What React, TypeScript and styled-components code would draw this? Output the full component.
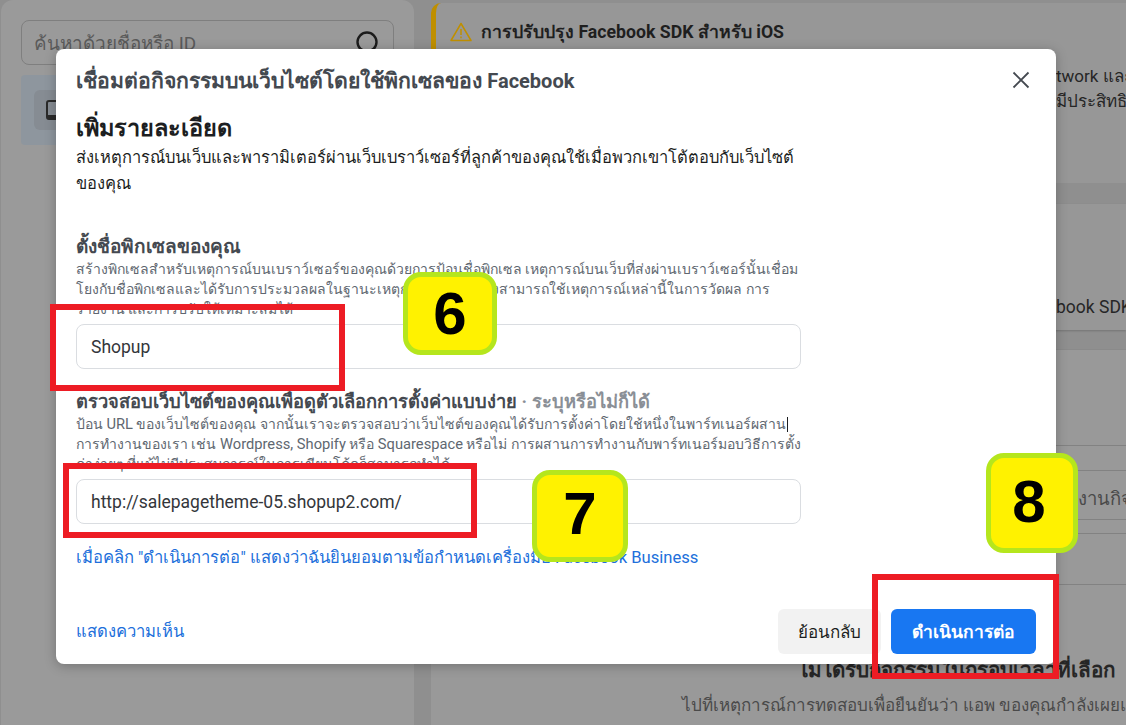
import React from 'react'
import styled, { createGlobalStyle } from 'styled-components'

const GlobalStyle = createGlobalStyle`
  html, body {
    margin: 0;
    padding: 0;
    height: 100%;
    overflow: hidden;
    background: #8f8f8f;
  }
  * {
    box-sizing: border-box;
  }
  body {
    font-family: Roboto, "Noto Sans", "Liberation Sans", sans-serif;
  }
`

const Page = styled.div`
  width: 1126px;
  height: 725px;
  display: grid;
  grid-template-columns: 414px 1fr;
  gap: 17px;
  overflow: hidden;
  background: #8f8f8f;
`

const Sidebar = styled.aside`
  margin-left: 1px;
  padding: 20px 20px 0;
  background: #9a9a9a;
  border-radius: 12px 12px 0 0;
  display: flex;
  flex-direction: column;
  gap: 10px;
`

const SearchBox = styled.div`
  height: 45px;
  padding: 0 12px;
  display: flex;
  align-items: center;
  justify-content: space-between;
  border: 1px solid #7f7f7f;
  border-radius: 8px;
  color: #5a5a5a;
  font-size: 18.9px;
  white-space: nowrap;
`

const SourceRow = styled.div`
  height: 70px;
  padding: 15px 13px;
  background: #8e969e;
  border-radius: 4px;
`

const SourceIcon = styled.div`
  width: 40px;
  height: 40px;
  display: flex;
  align-items: center;
  justify-content: center;
  background: #868c93;
  border-radius: 6px;
  color: #2a2a2a;
`

const Main = styled.main`
  padding-top: 3px;
  display: flex;
  flex-direction: column;
  overflow: hidden;
`

const Notice = styled.section`
  height: 180px;
  flex: none;
  padding: 15px 0 0 14px;
  margin-bottom: 21px;
  background: #979797;
  border-left: 5px solid #bf8f00;
  border-radius: 10px 0 0 0;
  overflow: hidden;
`

const NoticeTitle = styled.div`
  display: flex;
  align-items: center;
  gap: 9px;
  font-size: 17.7px;
  font-weight: 700;
  color: #1f1f1f;
  white-space: nowrap;
`

const NoticeLine = styled.div`
  margin-left: 606px;
  font-size: 17px;
  line-height: 25px;
  color: #262626;
  white-space: nowrap;
  &:nth-of-type(2) {
    margin-top: 18px;
  }
`

const SdkCard = styled.section`
  height: 126px;
  flex: none;
  margin-bottom: 19px;
  padding: 93px 0 0 625px;
  background: #979797;
  box-shadow: 0 1px 2px rgba(0, 0, 0, 0.2);
  font-size: 17.5px;
  color: #262626;
  white-space: nowrap;
  overflow: hidden;
`

const EventsCard = styled.section`
  flex: 1;
  background: #999999;
  border-top: 1px solid #8a8a8a;
  overflow: hidden;
`

const RuleRow = styled.div<{ $height: number }>`
  height: ${(p) => p.$height}px;
  border-bottom: 1px solid #828282;
  padding: 13px 0 0 647px;
  font-size: 18.5px;
  color: #4a4a4a;
  white-space: nowrap;
  overflow: hidden;
`

const EmptyTitle = styled.h3`
  margin: 74px 0 0 367px;
  font-size: 20.6px;
  font-weight: 700;
  line-height: 22px;
  color: #262626;
  white-space: nowrap;
`

const EmptyText = styled.p`
  margin: 10px 0 0 251px;
  font-size: 17px;
  color: #4a4a4a;
  white-space: nowrap;
`

const Modal = styled.div`
  position: absolute;
  left: 56px;
  top: 49px;
  width: 1000px;
  height: 615px;
  display: flex;
  flex-direction: column;
  background: #fff;
  border-radius: 8px;
  box-shadow: 0 2px 12px rgba(0, 0, 0, 0.25);
`

const ModalHeader = styled.header`
  height: 64px;
  flex: none;
  padding: 0 24px 2px 20px;
  display: flex;
  align-items: center;
  justify-content: space-between;
`

const ModalTitle = styled.h2`
  margin: 0;
  font-size: 21.2px;
  font-weight: 700;
  color: #444950;
`

const Latin = styled.span<{ $size: number }>`
  font-size: ${(p) => p.$size}px;
`

const CloseButton = styled.button`
  padding: 0;
  width: 22px;
  height: 22px;
  border: none;
  background: none;
  color: #444950;
`

const ModalBody = styled.div`
  flex: 1;
  padding: 0 20px;
`

const Heading = styled.h1`
  margin: 0;
  font-size: 23.5px;
  font-weight: 700;
  line-height: 30px;
  color: #1c1e21;
`

const Lead = styled.p`
  margin: 2px 0 0;
  width: 730px;
  font-size: 16.5px;
  line-height: 26px;
  color: #1c1e21;
`

const Field = styled.div<{ $top: number }>`
  margin-top: ${(p) => p.$top}px;
  width: 725px;
`

const FieldLabel = styled.div<{ $size: number }>`
  font-size: ${(p) => p.$size}px;
  font-weight: 700;
  line-height: 20px;
  color: #444950;
  white-space: nowrap;
`

const Optional = styled.span`
  color: #8a8f96;
`

const FieldHelp = styled.div<{ $gap: number }>`
  margin-top: ${(p) => p.$gap}px;
  font-size: 14px;
  line-height: 20px;
  color: #606770;
  white-space: nowrap;
`

const Caret = styled.span`
  display: inline-block;
  width: 1px;
  height: 15px;
  margin-left: 1px;
  vertical-align: -3px;
  background: #1c1e21;
`

const TextBox = styled.div`
  height: 45px;
  margin-top: 5px;
  padding: 0 14px;
  display: flex;
  align-items: center;
  border: 1px solid #dadde1;
  border-radius: 8px;
  font-size: 17.5px;
  color: #33363a;
`

const LinkText = styled.a`
  font-size: 16.6px;
  color: #216fdb;
`

const TermsLine = styled.div`
  margin-top: 24px;
  line-height: 20px;
`

const ModalFooter = styled.footer`
  height: 55px;
  flex: none;
  padding: 0 20px;
  display: flex;
  align-items: flex-start;
  justify-content: space-between;
`

const FeedbackLink = styled(LinkText)`
  line-height: 45px;
`

const Actions = styled.div`
  display: flex;
  gap: 10px;
`

const Button = styled.button<{ $primary?: boolean }>`
  width: ${(p) => (p.$primary ? 145 : 103)}px;
  height: 45px;
  padding: 0;
  border: none;
  border-radius: 6px;
  font-family: inherit;
  font-size: ${(p) => (p.$primary ? 17.5 : 17)}px;
  font-weight: ${(p) => (p.$primary ? 700 : 500)};
  background: ${(p) => (p.$primary ? '#1877f2' : '#f2f2f2')};
  color: ${(p) => (p.$primary ? '#fff' : '#1c1e21')};
`

const RedBox = styled.div<{ $x: number; $y: number; $w: number; $h: number }>`
  position: absolute;
  left: ${(p) => p.$x}px;
  top: ${(p) => p.$y}px;
  width: ${(p) => p.$w}px;
  height: ${(p) => p.$h}px;
  border: 6px solid #ed1c24;
`

const Badge = styled.div<{ $x: number; $y: number; $w: number; $h: number; $pr?: number; $pb: number }>`
  position: absolute;
  left: ${(p) => p.$x}px;
  top: ${(p) => p.$y}px;
  width: ${(p) => p.$w}px;
  height: ${(p) => p.$h}px;
  padding: 0 ${(p) => p.$pr ?? 0}px ${(p) => p.$pb}px 0;
  display: flex;
  align-items: center;
  justify-content: center;
  background: #fff200;
  border: 5px solid #b5e61d;
  border-radius: 18px;
  font-family: "Liberation Sans", Arial, sans-serif;
  font-size: 60px;
  font-weight: 700;
  color: #000;
`

export default function App() {
  return (
    <>
      <GlobalStyle />
      <Page>
        <Sidebar>
          <SearchBox>
            <span>ค้นหาด้วยชื่อหรือ ID</span>
            <svg width="26" height="26" viewBox="0 0 26 26" fill="none" stroke="#1c1c1c" strokeWidth="2.4">
              <circle cx="12" cy="12" r="9.5" />
              <path d="M19 19l5 5" />
            </svg>
          </SearchBox>
          <SourceRow>
            <SourceIcon>
              <svg width="24" height="24" viewBox="0 0 24 24" fill="none" stroke="currentColor" strokeWidth="2">
                <rect x="5" y="3" width="18" height="18" rx="2" />
                <path d="M5 18.5h18" strokeWidth="3" />
              </svg>
            </SourceIcon>
          </SourceRow>
        </Sidebar>
        <Main>
          <Notice>
            <NoticeTitle>
              <svg width="22" height="20" viewBox="0 0 22 20" fill="none" stroke="#bf8f00" strokeWidth="1.5">
                <path d="M11 1.5L21 18.5H1Z" strokeLinejoin="round" />
                <path d="M11 7v6M11 14.5v1.8" />
              </svg>
              การปรับปรุง Facebook SDK สำหรับ iOS
            </NoticeTitle>
            <NoticeLine>twork และ</NoticeLine>
            <NoticeLine>มีประสิทธิ</NoticeLine>
          </Notice>
          <SdkCard>book SDK</SdkCard>
          <EventsCard>
            <RuleRow $height={96} />
            <RuleRow $height={25} />
            <RuleRow $height={49}>งานกิจกรรม</RuleRow>
            <RuleRow $height={12} />
            <RuleRow $height={51} />
            <EmptyTitle>ไม่ได้รับกิจกรรมในกรอบเวลาที่เลือก</EmptyTitle>
            <EmptyText>ไปที่เหตุการณ์การทดสอบเพื่อยืนยันว่า แอพ ของคุณกำลังเผยแพร่</EmptyText>
          </EventsCard>
        </Main>
      </Page>

      <Modal>
        <ModalHeader>
          <ModalTitle>
            เชื่อมต่อกิจกรรมบนเว็บไซต์โดยใช้พิกเซลของ <Latin $size={20}>Facebook</Latin>
          </ModalTitle>
          <CloseButton aria-label="ปิด">
            <svg width="22" height="22" viewBox="0 0 22 22" fill="none" stroke="currentColor" strokeWidth="1.8">
              <path d="M3.5 3.5l15 15M18.5 3.5l-15 15" />
            </svg>
          </CloseButton>
        </ModalHeader>
        <ModalBody>
          <Heading>เพิ่มรายละเอียด</Heading>
          <Lead>
            ส่งเหตุการณ์บนเว็บและพารามิเตอร์ผ่านเว็บเบราว์เซอร์ที่ลูกค้าของคุณใช้เมื่อพวกเขาโต้ตอบกับเว็บไซต์ของคุณ
          </Lead>
          <Field $top={40}>
            <FieldLabel $size={19}>ตั้งชื่อพิกเซลของคุณ</FieldLabel>
            <FieldHelp $gap={2}>
              สร้างพิกเซลสำหรับเหตุการณ์บนเบราว์เซอร์ของคุณด้วยการป้อนชื่อพิกเซล เหตุการณ์บนเว็บที่ส่งผ่านเบราว์เซอร์นั้นเชื่อม
              <br />
              โยงกับชื่อพิกเซลและได้รับการประมวลผลในฐานะเหตุการณ์เว็บ คุณจึงสามารถใช้เหตุการณ์เหล่านี้ในการวัดผล การ
              <br />
              รายงาน และการปรับให้เหมาะสมได้
            </FieldHelp>
            <TextBox>Shopup</TextBox>
          </Field>
          <Field $top={23}>
            <FieldLabel $size={18.3}>
              ตรวจสอบเว็บไซต์ของคุณเพื่อดูตัวเลือกการตั้งค่าแบบง่าย <Optional>· ระบุหรือไม่ก็ได้</Optional>
            </FieldLabel>
            <FieldHelp $gap={2}>
              ป้อน <Latin $size={14.7}>URL</Latin> ของเว็บไซต์ของคุณ จากนั้นเราจะตรวจสอบว่าเว็บไซต์ของคุณได้รับการตั้งค่าโดยใช้หนึ่งในพาร์ทเนอร์ผสาน
              <Caret />
              <br />
              การทำงานของเรา เช่น <Latin $size={14.7}>Wordpress, Shopify</Latin> หรือ <Latin $size={14.7}>Squarespace</Latin> หรือไม่ การผสานการทำงานกับพาร์ทเนอร์มอบวิธีการตั้ง
              <br />
              ค่าง่ายๆ ที่แม้ไม่มีประสบการณ์ในการเขียนโค้ดก็สามารถทำได้
            </FieldHelp>
            <TextBox>http://salepagetheme-05.shopup2.com/</TextBox>
          </Field>
          <TermsLine>
            <LinkText>เมื่อคลิก "ดำเนินการต่อ" แสดงว่าฉันยินยอมตามข้อกำหนดเครื่องมือ Facebook Business</LinkText>
          </TermsLine>
        </ModalBody>
        <ModalFooter>
          <FeedbackLink>แสดงความเห็น</FeedbackLink>
          <Actions>
            <Button>ย้อนกลับ</Button>
            <Button $primary>ดำเนินการต่อ</Button>
          </Actions>
        </ModalFooter>
      </Modal>

      <RedBox $x={50} $y={304} $w={295} $h={87} />
      <RedBox $x={63} $y={463} $w={414} $h={75} />
      <RedBox $x={872} $y={574} $w={187} $h={105} />
      <Badge $x={403} $y={272} $w={94} $h={83} $pb={1}>6</Badge>
      <Badge $x={532} $y={470} $w={96} $h={92} $pb={6}>7</Badge>
      <Badge $x={986} $y={453} $w={92} $h={100} $pb={4} $pr={6}>8</Badge>
    </>
  )
}
